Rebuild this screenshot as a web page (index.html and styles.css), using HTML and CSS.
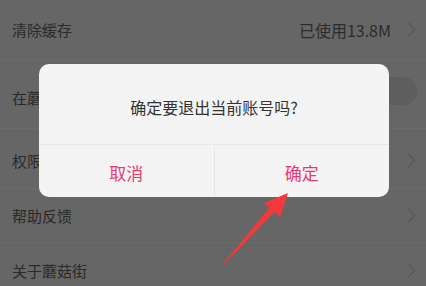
FILE: index.html
```html
<!DOCTYPE html>
<html lang="zh">
<head>
<meta charset="utf-8">
<link rel="stylesheet" href="styles.css">
</head>
<body>
<div class="page">
  <div class="row r1">
    <span class="label">清除缓存</span>
    <span class="right"><span class="value">已使用13.8M</span>
      <svg class="chev" viewBox="0 0 10 18"><path d="M1.5 1.5 L8.5 9 L1.5 16.5"/></svg></span>
  </div>
  <div class="row r2">
    <span class="label">在蘑</span>
    <span class="toggle"></span>
  </div>
  <div class="row r3">
    <span class="label">权限</span>
    <svg class="chev" viewBox="0 0 10 18"><path d="M1.5 1.5 L8.5 9 L1.5 16.5"/></svg>
  </div>
  <div class="row r4">
    <span class="label">帮助反馈</span>
    <svg class="chev" viewBox="0 0 10 18"><path d="M1.5 1.5 L8.5 9 L1.5 16.5"/></svg>
  </div>
  <div class="row r5">
    <span class="label">关于蘑菇街</span>
    <svg class="chev" viewBox="0 0 10 18"><path d="M1.5 1.5 L8.5 9 L1.5 16.5"/></svg>
  </div>

  <div class="dialog">
    <div class="msg">确定要退出当前账号吗?</div>
    <div class="actions">
      <div class="btn">取消</div>
      <div class="btn">确定</div>
    </div>
  </div>

  <svg class="arrow" viewBox="0 0 426 286" width="426" height="286">
    <polygon points="288,193 280,217 274.5,212 219,269 269.5,207.5 264,203"/>
  </svg>
</div>
</body>
</html>
```

FILE: styles.css
```css
html, body {
  margin: 0;
  padding: 0;
}
body {
  background: #666666;
  font-family: "Noto Sans CJK SC", "Noto Sans", sans-serif;
  color: #2a2a2a;
}
.page {
  position: relative;
  width: 426px;
  height: 286px;
  overflow: hidden;
}
.row {
  display: flex;
  align-items: center;
  justify-content: space-between;
  padding: 0 10px 0 12px;
  box-sizing: border-box;
  border-bottom: 1px solid #6b6b6b;
  font-size: 15px;
}
.r1 { height: 60px; }
.r2 { height: 69px; padding-top: 6px; }
.r3 { height: 60px; padding-top: 4px; }
.r4 { height: 54px; }
.r5 { height: 54px; border-bottom: none; }
.right {
  display: flex;
  align-items: center;
  gap: 16px;
}
.value {
  font-size: 16px;
  color: #2c2c2c;
}
.chev {
  width: 9px;
  height: 17px;
  fill: none;
  stroke: #585858;
  stroke-width: 1.3;
}
.toggle {
  width: 52px;
  height: 28px;
  border-radius: 14px;
  background: #5e5e5e;
  margin-right: -1px;
  margin-top: -12px;
}
.dialog {
  position: absolute;
  left: 39px;
  top: 64px;
  width: 350px;
  height: 133px;
  background: #f4f4f4;
  border-radius: 10px;
  display: flex;
  flex-direction: column;
}
.msg {
  height: 81px;
  display: flex;
  align-items: center;
  justify-content: center;
  font-size: 16px;
  color: #333333;
  border-bottom: 1px solid #e8e8e8;
  box-sizing: border-box;
  padding-top: 6px;
}
.actions {
  flex: 1;
  display: flex;
}
.btn {
  flex: 1;
  display: flex;
  align-items: center;
  justify-content: center;
  color: #e8386e;
  font-size: 17px;
  padding-top: 2px;
}
.btn + .btn {
  border-left: 1px solid #e8e8e8;
}
.arrow {
  position: absolute;
  left: 0;
  top: 0;
}
.arrow polygon {
  fill: #f5383c;
}
```
